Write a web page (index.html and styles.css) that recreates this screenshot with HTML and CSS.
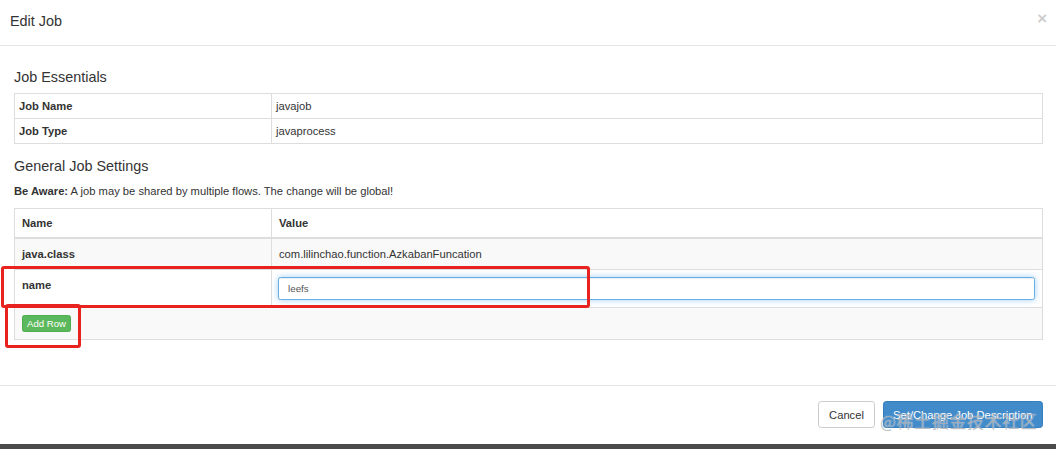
FILE: index.html
```html
<!DOCTYPE html>
<html>
<head>
<meta charset="utf-8">
<link rel="stylesheet" href="styles.css">
</head>
<body>
<div class="modal">
  <div class="modal-header">
    <h4 class="modal-title">Edit Job</h4>
    <span class="close">×</span>
  </div>
  <div class="modal-body">
    <h4 class="section-title">Job Essentials</h4>
    <table class="table condensed">
      <tr><th>Job Name</th><td>javajob</td></tr>
      <tr><th>Job Type</th><td>javaprocess</td></tr>
    </table>
    <h4 class="section-title second">General Job Settings</h4>
    <p class="aware"><strong>Be Aware:</strong> A job may be shared by multiple flows. The change will be global!</p>
    <table class="table props">
      <thead>
        <tr><th>Name</th><th>Value</th></tr>
      </thead>
      <tbody>
        <tr class="striped"><td class="key">java.class</td><td>com.lilinchao.function.AzkabanFuncation</td></tr>
        <tr><td class="key">name</td><td class="input-cell"><input class="form-control" type="text" value="leefs"></td></tr>
        <tr class="striped"><td class="add-cell" colspan="2"><button class="btn btn-success btn-xs">Add Row</button></td></tr>
      </tbody>
    </table>
  </div>
  <div class="modal-footer">
    <button class="btn btn-default">Cancel</button>
    <button class="btn btn-primary">Set/Change Job Description</button>
  </div>
  <div class="bottom-bar"></div>

  <div class="mark mark-1"></div>
  <div class="mark mark-2"></div>
  <div class="watermark">@稀土掘金技术社区</div>
</div>
</body>
</html>
```

FILE: styles.css
```css
* { box-sizing: border-box; }
html, body {
  margin: 0;
  padding: 0;
  background: #fff;
}
body {
  width: 1056px;
  height: 449px;
  overflow: hidden;
  font-family: "Liberation Sans", Arial, sans-serif;
  font-size: 11.2px;
  line-height: 16px;
  color: #333;
}
.modal {
  position: relative;
  width: 1056px;
  height: 449px;
  display: flex;
  flex-direction: column;
  background: #fff;
}
.modal-header {
  height: 46px;
  padding: 11px 9px 0 10px;
  border-bottom: 1px solid #e5e5e5;
  display: flex;
  justify-content: space-between;
  align-items: flex-start;
}
.modal-title {
  margin: 0;
  font-size: 14.4px;
  font-weight: normal;
  line-height: 20px;
  color: #333;
}
.close {
  font-size: 16.8px;
  font-weight: bold;
  line-height: 1;
  color: #000;
  opacity: 0.2;
  margin-top: 0;
}
.modal-body {
  height: 339px;
  padding: 21px 13px 0 14px;
}
.section-title {
  margin: 0;
  font-size: 14.4px;
  font-weight: normal;
  line-height: 20px;
  color: #333;
}
.section-title.second { margin-top: 12px; }
.table {
  width: 100%;
  border-collapse: collapse;
  margin-top: 6px;
}
.table th, .table td {
  border: 1px solid #ddd;
  text-align: left;
  vertical-align: top;
}
.table tr > :first-child { width: 25%; }
.table tr > .add-cell { width: auto; }
.condensed th, .condensed td {
  padding: 4px 4px;
  line-height: 16px;
}
.condensed th { font-weight: bold; }
.condensed td { font-weight: normal; }
.aware {
  margin: 7px 0 0 0;
  line-height: 16px;
  font-size: 11.2px;
}
.props { margin-top: 9px; }
.props thead th {
  padding: 6px 7px;
  font-weight: bold;
  border-bottom: 2px solid #ddd;
  line-height: 16px;
}
.props tbody td {
  padding: 7px 7px;
  line-height: 16px;
  height: 31px;
}
.props td.key { font-weight: bold; }
.props tr.striped td { background: #f9f9f9; }
.props td.input-cell { padding: 7px 7px 7px 6px; }
.form-control {
  display: block;
  width: 100%;
  height: 23px;
  margin: 0;
  padding: 2px 9px;
  font-family: "Liberation Sans", Arial, sans-serif;
  font-size: 9.8px;
  color: #555;
  background: #fff;
  border: 1px solid #66afe9;
  border-radius: 2.4px;
  outline: 0;
  box-shadow: inset 0 1px 1px rgba(0,0,0,.075), 0 0 6px rgba(102,175,233,.6);
}
.btn {
  display: inline-block;
  font-family: "Liberation Sans", Arial, sans-serif;
  font-size: 11.2px;
  line-height: 16px;
  padding: 4.6px 9.6px;
  border: 1px solid transparent;
  border-radius: 3.2px;
  cursor: pointer;
  margin: 0;
}
.btn-xs {
  font-size: 9.6px;
  line-height: 14px;
  padding: 0.5px 4px;
  border-radius: 2.4px;
  display: block;
}
.btn-success {
  color: #fff;
  background: #5cb85c;
  border-color: #4cae4c;
}
.btn-default {
  color: #333;
  background: #fff;
  border-color: #ccc;
}
.btn-primary {
  color: #fff;
  background: #428bca;
  border-color: #357ebd;
}
.modal-footer {
  height: 59px;
  border-top: 1px solid #e5e5e5;
  padding: 15px 13px 0 0;
  display: flex;
  justify-content: flex-end;
  align-items: flex-start;
  gap: 8px;
}
.modal-footer .btn { height: 27px; }
.bottom-bar {
  height: 5px;
  background: #4b4b4b;
}
.mark {
  position: absolute;
  border: 3px solid #e8231f;
  border-radius: 3px;
  pointer-events: none;
}
.mark-1 { left: 1px; top: 266px; width: 589px; height: 42px; }
.mark-2 { left: 5px; top: 304px; width: 76px; height: 44px; }
.watermark {
  position: absolute;
  left: 880px;
  top: 410px;
  font-family: "Noto Sans CJK SC", "Liberation Sans", sans-serif;
  font-size: 17px;
  line-height: 22px;
  letter-spacing: 0.6px;
  color: rgba(120, 128, 138, 0.5);
  text-shadow: 0 0 1px rgba(255,255,255,0.8);
  white-space: nowrap;
  pointer-events: none;
}
```
